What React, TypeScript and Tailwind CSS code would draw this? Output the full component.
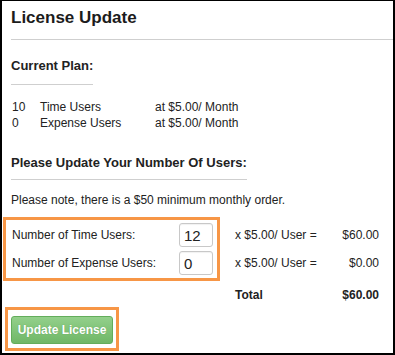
import React from 'react';

const plan = [
  { count: '10', name: 'Time Users', price: 'at $5.00/ Month' },
  { count: '0', name: 'Expense Users', price: 'at $5.00/ Month' },
];

const updates = [
  { label: 'Number of Time Users:', value: '12', total: '$60.00' },
  { label: 'Number of Expense Users:', value: '0', total: '$0.00' },
];

const App = () => {
  return (
    <div
      className="w-[395px] h-[355px] bg-white border-t border-x-2 border-b-2 border-black text-[#222] overflow-hidden"
      style={{ fontFamily: '"Liberation Sans", Arial, sans-serif' }}>
      <div className="pl-[9px]">
        <h1 className="pt-[7px] text-[17px] leading-[20px] font-bold text-[#1c1c1c]">
          License Update
        </h1>
        <div className="mt-[11px] h-px bg-[#cfcfcf]" />

        <h2 className="mt-[18px] w-fit pb-[10px] border-b border-[#cfcfcf] text-[13px] leading-[16px] font-bold">
          Current Plan:
        </h2>

        <div className="mt-[14px] text-[12px] leading-[16px]">
          {plan.map((row) => (
            <div key={row.name} className="flex">
              <span className="w-[29px] pl-px">{row.count}</span>
              <span className="w-[115px]">{row.name}</span>
              <span>{row.price}</span>
            </div>
          ))}
        </div>

        <h2 className="mt-[24px] w-fit pb-[8px] border-b border-[#cfcfcf] text-[13px] leading-[16px] font-bold">
          Please Update Your Number Of Users:
        </h2>

        <p className="mt-[12px] text-[12px] leading-[16px]">
          Please note, there is a $50 minimum monthly order.
        </p>
      </div>

      <div className="mt-[9px] ml-px flex items-start text-[12px] leading-[16px]">
        <div className="w-[217px] border-[3px] border-[#f79646] pl-[6px] pr-[4px] pt-[3px] pb-[3px] flex flex-col gap-[4px]">
          {updates.map((row) => (
            <div key={row.label} className="flex items-center justify-between">
              <span>{row.label}</span>
              <input
                readOnly
                value={row.value}
                className="w-[34px] h-[24px] px-[4px] border border-[#c8c8c8] rounded-[3px] text-[15px] text-[#222] bg-white outline-none shadow-[inset_0_1px_1px_rgba(0,0,0,0.06)]"
                style={{ fontFamily: '"Liberation Sans", Arial, sans-serif' }}
              />
            </div>
          ))}
        </div>

        <div className="ml-[15px] w-[144px] pt-[6px] flex flex-col">
          {updates.map((row, i) => (
            <div
              key={row.label}
              className={`h-[24px] flex items-center justify-between ${i > 0 ? 'mt-[4px]' : ''}`}>
              <span>x $5.00/ User =</span>
              <span>{row.total}</span>
            </div>
          ))}
          <div className="mt-[12px] flex justify-between font-bold">
            <span>Total</span>
            <span>$60.00</span>
          </div>
        </div>
      </div>

      <div className="mt-[4px] ml-[3px] w-[114px] border-[3px] border-[#f79646] pl-[3px] pt-[6px] pb-[4px]">
        <button className="block w-[102px] h-[28px] rounded-[3px] border border-[#63ad5b] bg-gradient-to-b from-[#93d08b] to-[#6fb767] text-white text-[12px] font-bold [text-shadow:0_0_1px_rgba(60,120,55,0.5)]">
          Update License
        </button>
      </div>
    </div>
  );
};

export default App;
